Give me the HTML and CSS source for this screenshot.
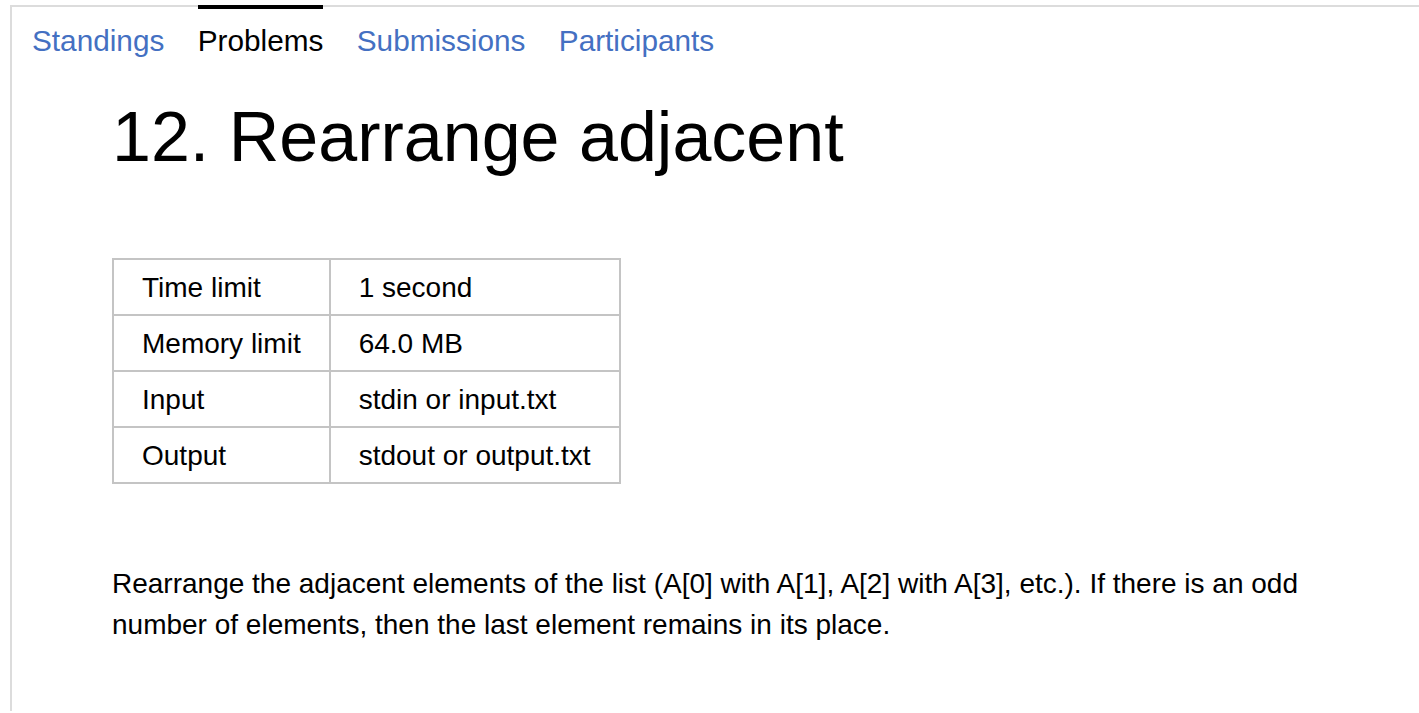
FILE: index.html
```html
<!DOCTYPE html>
<html>
<head>
<meta charset="utf-8">
<title>12. Rearrange adjacent</title>
<link rel="stylesheet" href="styles.css">
</head>
<body>
<div class="frame">
  <nav class="tabs">
    <a class="tab" href="#">Standings</a>
    <a class="tab active" href="#">Problems</a>
    <a class="tab" href="#">Submissions</a>
    <a class="tab" href="#">Participants</a>
  </nav>
  <main class="content">
    <h1 class="title">12. Rearrange adjacent</h1>
    <table class="limits">
      <tr><td>Time limit</td><td>1 second</td></tr>
      <tr><td>Memory limit</td><td>64.0 MB</td></tr>
      <tr><td>Input</td><td>stdin or input.txt</td></tr>
      <tr><td>Output</td><td>stdout or output.txt</td></tr>
    </table>
    <p class="statement">Rearrange the adjacent elements of the list (A[0] with A[1], A[2] with A[3], etc.). If there is an odd number of elements, then the last element remains in its place.</p>
  </main>
</div>
</body>
</html>
```

FILE: styles.css
```css
html, body {
  margin: 0;
  padding: 0;
  background: #fff;
}
body {
  font-family: "Liberation Sans", Arial, sans-serif;
  color: #000;
}
.frame {
  margin: 5px 0 0 10px;
  border-top: 2px solid #dcdcdc;
  border-left: 2px solid #dcdcdc;
  min-height: 706px;
  box-sizing: border-box;
}
.tabs {
  display: flex;
  gap: 33.4px;
  padding-left: 20px;
  margin-top: -2px;
}
.tab {
  display: block;
  border-top: 4px solid transparent;
  padding-top: 15px;
  padding-bottom: 1px;
  font-size: 29.75px;
  line-height: 34px;
  color: #4470c2;
  text-decoration: none;
}
.tab.active {
  border-top-color: #000;
  color: #000;
}
.content {
  padding: 0 100px 0 100px;
}
.title {
  margin: 38px 0 0 0;
  font-size: 70px;
  font-weight: normal;
  line-height: 80px;
}
.limits {
  margin-top: 81px;
  border-collapse: collapse;
  font-size: 28px;
}
.limits td {
  border: 2px solid #c4c4c4;
  padding: 12px 28px 10px 28px;
  line-height: 32px;
  white-space: nowrap;
}
.statement {
  margin: 79px 0 0 0;
  font-size: 28px;
  line-height: 41px;
}
```
